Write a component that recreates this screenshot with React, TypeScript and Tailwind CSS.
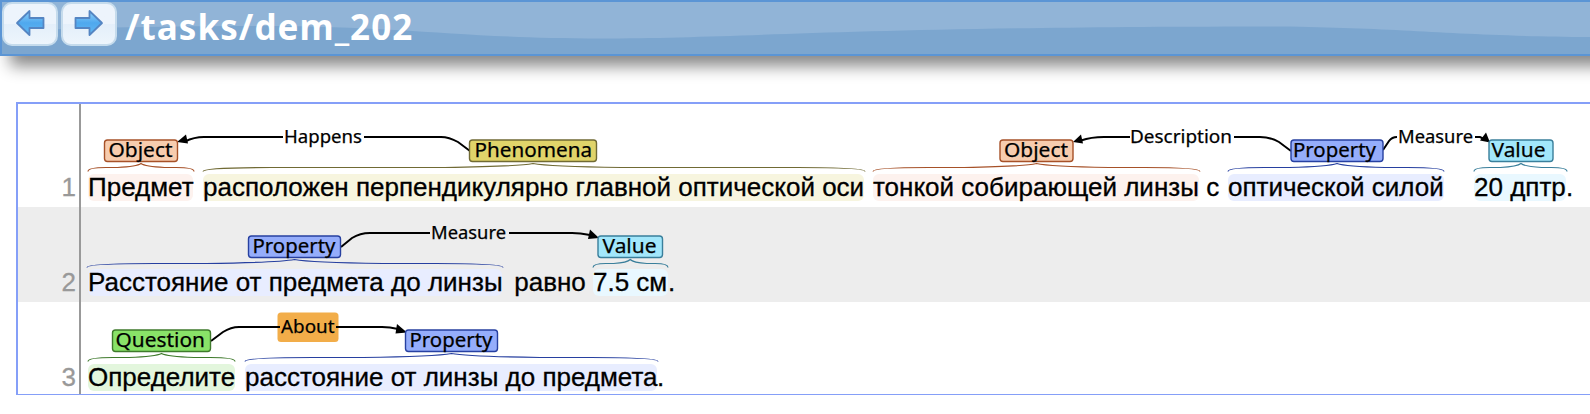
import React from "react";

type Tone = "object" | "phenomena" | "property" | "value" | "question";

const tones: Record<Tone, { fill: string; stroke: string; highlight: string }> = {
  object: { fill: "#f7ccae", stroke: "#a65128", highlight: "bg-[#fdf2ee]" },
  phenomena: { fill: "#e0d46a", stroke: "#706a34", highlight: "bg-[#f7f5df]" },
  property: { fill: "#95adfb", stroke: "#2740a0", highlight: "bg-[#e8edff]" },
  value: { fill: "#a2e7fb", stroke: "#3a7f9b", highlight: "bg-[#e9f8ff]" },
  question: { fill: "#89e268", stroke: "#3f7a2c", highlight: "bg-[#e3f6dd]" },
};

type Entity = { tone: Tone; label: string; x: number; w: number; tx: number; tw: number; from: number; to: number };
type Arc = { d: string[]; head: string; label: string; x: number; w: number; boxed?: boolean };
type Chunk = { text: string; width: string; tone?: Tone };
type Row = { height: string; bg: string; pad: string; top: number; chunks: Chunk[]; entities: Entity[]; arcs: Arc[] };

const rows: Row[] = [
  {
    height: "h-[103px]",
    bg: "bg-white",
    pad: "pb-[6px]",
    top: 35.5,
    chunks: [
      { text: "Предмет", width: "w-[105px]", tone: "object" },
      { text: " ", width: "w-[10px]" },
      { text: "расположен перпендикулярно главной оптической оси", width: "w-[661px]", tone: "phenomena" },
      { text: " ", width: "w-[9px]" },
      { text: "тонкой собирающей линзы", width: "w-[326px]", tone: "object" },
      { text: " с ", width: "w-[29px]" },
      { text: "оптической силой", width: "w-[216px]", tone: "property" },
      { text: " ", width: "w-[30px]" },
      { text: "20 дптр", width: "w-[92px]", tone: "value" },
      { text: ".", width: "w-[8px]" },
    ],
    entities: [
      { tone: "object", label: "Object", x: 104.5, w: 73, tx: 108.5, tw: 64, from: 88, to: 194 },
      { tone: "phenomena", label: "Phenomena", x: 469.5, w: 127, tx: 474.5, tw: 117.5, from: 203, to: 865 },
      { tone: "object", label: "Object", x: 1000, w: 73, tx: 1004, tw: 64, from: 873, to: 1200 },
      { tone: "property", label: "Property", x: 1291, w: 92, tx: 1293, tw: 83, from: 1228, to: 1444 },
      { tone: "value", label: "Value", x: 1489, w: 64, tx: 1491.5, tw: 54, from: 1474, to: 1567 },
    ],
    arcs: [
      { d: ["M185 37.5 Q194 33 204 33 H283", "M364 33 H441 Q449 33 458 38 L470 47"], head: "177,38 186,30.5 188,39.5", label: "Happens", x: 284, w: 78 },
      { d: ["M1081 36.5 Q1091 33 1104 33 H1130", "M1234 33 H1260 Q1270 33 1279 38 L1291 47"], head: "1073,38 1081,30.5 1083,39.5", label: "Description", x: 1130, w: 102 },
      { d: ["M1383 46 L1389 37 Q1392 33 1397 33 H1397", "M1475 33 H1480 L1486 36"], head: "1490,38.5 1486,28.5 1480,36.5", label: "Measure", x: 1398, w: 75 },
    ],
  },
  {
    height: "h-[95px]",
    bg: "bg-[#ededed]",
    pad: "pb-[6px]",
    top: 28.5,
    chunks: [
      { text: "Расстояние от предмета до линзы", width: "w-[414px]", tone: "property" },
      { text: " ", width: "w-[5px]" },
      { text: " равно ", width: "w-[86px]" },
      { text: "7.5 см", width: "w-[75px]", tone: "value" },
      { text: ".", width: "w-[8px]" },
    ],
    entities: [
      { tone: "property", label: "Property", x: 248.5, w: 92, tx: 252.5, tw: 83, from: 87, to: 503 },
      { tone: "value", label: "Value", x: 598, w: 64.5, tx: 602.5, tw: 54, from: 593, to: 668 },
    ],
    arcs: [
      { d: ["M341 40 L352 31 Q360 26 370 26 H430", "M509 26 H572 Q580 26 590 28"], head: "599,31 590,22.5 588,32", label: "Measure", x: 431, w: 75 },
    ],
  },
  {
    height: "h-[92px]",
    bg: "bg-white",
    pad: "pb-[3px]",
    top: 27.5,
    chunks: [
      { text: "Определите", width: "w-[147px]", tone: "question" },
      { text: " ", width: "w-[10px]" },
      { text: "расстояние от линзы до предмета", width: "w-[412px]", tone: "property" },
      { text: ".", width: "w-[8px]" },
    ],
    entities: [
      { tone: "question", label: "Question", x: 112.5, w: 98, tx: 115.5, tw: 89.5, from: 88, to: 235 },
      { tone: "property", label: "Property", x: 405.5, w: 92, tx: 409.5, tw: 83, from: 245, to: 658 },
    ],
    arcs: [
      { d: ["M211 39 L223 30 Q231 25 239 25 H280", "M336 25 H382 Q390 25 398 27"], head: "407,30.5 397,22 395.5,31.5", label: "About", x: 281, w: 53.5, boxed: true },
    ],
  },
];

function brace({ from, to, x, w }: Entity, y: number) {
  const mid = x + w / 2;
  const a = Math.min(52, (to - from) * 0.13);
  return `M${from} ${y + 8} C${from} ${y + 5} ${from + a * 0.5} ${y + 4} ${from + a * 1.3} ${y + 4} H${mid - a * 1.7} Q${mid - a * 0.3} ${y + 3} ${mid} ${y} Q${mid + a * 0.3} ${y + 3} ${mid + a * 1.7} ${y + 4} H${to - a * 1.3} C${to - a * 0.5} ${y + 4} ${to} ${y + 5} ${to} ${y + 8}`;
}

function Annotations({ row }: { row: Row }) {
  return (
    <svg className="absolute -left-[18px] top-0 h-full w-[1590px] overflow-visible font-['Noto_Sans',sans-serif] text-[20px]">
      {row.arcs.map((a, i) => (
        <g key={i}>
          {a.boxed && <rect x={277.5} y={row.top - 17} width={61} height={29.5} rx={3.5} fill="#f2ad49" />}
          {a.d.map((d) => <path key={d} d={d} fill="none" stroke="#000" strokeWidth={2} />)}
          <polygon points={a.head} />
          <text x={a.x} y={row.top + 3.5} fontSize={18.6} textLength={a.w} lengthAdjust="spacingAndGlyphs" stroke="#000" strokeWidth={0.25}>{a.label}</text>
        </g>
      ))}
      {row.entities.map((e, i) => (
        <g key={i}>
          <rect x={e.x} y={row.top + 0.5} width={e.w} height={21.5} rx={3} fill={tones[e.tone].fill} stroke={tones[e.tone].stroke} strokeWidth={1.4} />
          <text x={e.tx} y={row.top + 17.5} textLength={e.tw} lengthAdjust="spacingAndGlyphs" stroke="#000" strokeWidth={0.25}>{e.label}</text>
          <path d={brace(e, row.top + 24)} fill="none" stroke={tones[e.tone].stroke} strokeWidth={1.2} />
        </g>
      ))}
    </svg>
  );
}

function NavButton({ flip }: { flip?: boolean }) {
  return (
    <button aria-label={flip ? "Next" : "Previous"} className="flex h-[44px] w-[56px] items-center justify-center rounded-[10px] border-2 border-[#c5dbec] bg-linear-to-b from-[#edf4fc] from-50% via-[#e4effa] via-50% to-[#edf5fc]">
      <svg viewBox="0 0 32 32" className={flip ? "mb-0.5 h-8 w-8 -scale-x-100" : "mb-0.5 h-8 w-8"}>
        <defs>
          <linearGradient id="arrow" x1="0" y1="0" x2="0" y2="1">
            <stop offset="0" stopColor="#8fd0fa" />
            <stop offset="0.5" stopColor="#4fa8ee" />
            <stop offset="1" stopColor="#62b8f3" />
          </linearGradient>
        </defs>
        <path d="M3 16 L15.5 4 V11 H29.5 V21 H15.5 V28 Z" fill="url(#arrow)" stroke="#5585c2" strokeWidth="1.8" strokeLinejoin="round" />
      </svg>
    </button>
  );
}

export default function App() {
  return (
    <div className="h-[414px] w-[1590px] overflow-hidden bg-white">
      <header className="relative flex h-[56px] w-[1620px] border-2 border-[#5b95d5] bg-[#7ca6cf] shadow-[10px_10px_15px_#888]">
        <svg className="absolute inset-0 h-[52px] w-[1590px]" viewBox="0 0 1590 52" preserveAspectRatio="none">
          <path d="M0 30 C80 25 180 24 260 24 C400 24 460 36.5 598 36.5 C740 36.5 840 25 1260 24.5 C1400 25 1440 34 1590 35 V0 H0 Z" fill="#91b4d7" />
        </svg>
        <div className="relative flex gap-[3px]">
          <NavButton />
          <NavButton flip />
        </div>
        <h1 className="relative ml-[8px] mt-[1px] whitespace-nowrap font-['Noto_Sans',sans-serif] text-[35px] font-bold leading-[48px] tracking-[1.05px] text-white">/tasks/dem_202</h1>
      </header>
      <main className="ml-[16px] mt-[46px] w-[1600px] border-2 border-b-1 border-[#859ff8]">
        {rows.map((row, i) => (
          <section key={i} className={`relative flex items-end ${row.height} ${row.bg}`}>
            <div className="h-full w-[63px] shrink-0 border-r-2 border-[#999]">
              <div className={`flex h-full items-end justify-end pr-[3px] font-['Liberation_Sans',sans-serif] text-[26px] leading-[27px] text-[#999] [-webkit-text-stroke:0.3px_#999] ${row.pad}`}>{i + 1}</div>
            </div>
            <Annotations row={row} />
            <p className={`relative flex pl-[7px] font-['Liberation_Sans',sans-serif] text-[26px] leading-[27px] text-black [-webkit-text-stroke:0.3px_#000] ${row.pad}`}>
              {row.chunks.map((c, j) => (
                <span key={j} className={`${c.width} h-[27px] shrink-0 whitespace-pre ${c.tone ? `rounded-[6px] ${tones[c.tone].highlight}` : ""}`}>{c.text}</span>
              ))}
            </p>
          </section>
        ))}
      </main>
    </div>
  );
}
